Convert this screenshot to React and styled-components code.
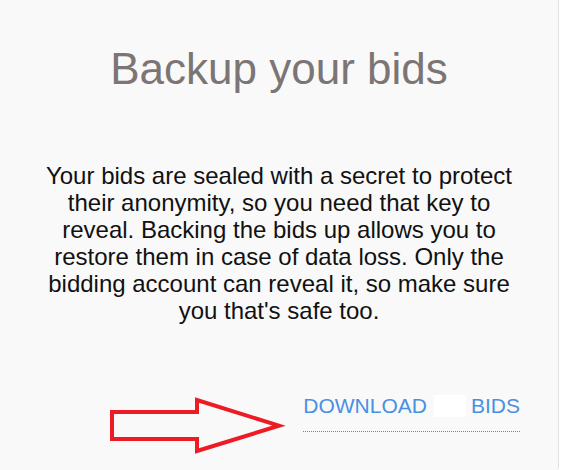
import React from 'react'
import styled, { createGlobalStyle } from 'styled-components'

const GlobalStyle = createGlobalStyle`
  html, body {
    margin: 0;
    padding: 0;
    background: #ffffff;
  }
  body {
    font-family: "Liberation Sans", Arial, sans-serif;
  }
`

const Card = styled.div`
  position: relative;
  box-sizing: border-box;
  width: 559px;
  height: 470px;
  padding: 44px 38px 0 0;
  background: #f9f9f9;
  border-right: 1px solid #e2e2e2;
  border-bottom-right-radius: 3px;
  overflow: hidden;
`

const Title = styled.h1`
  margin: 0;
  font-size: 44px;
  font-weight: 400;
  color: #7c7575;
  text-align: center;
  padding-left: 38px;
`

const Body = styled.p`
  width: 480px;
  margin: 68px auto 0;
  padding-left: 38px;
  font-size: 24px;
  line-height: 27px;
  color: #111111;
  text-align: center;
`

const Footer = styled.div`
  display: flex;
  justify-content: flex-end;
  margin-top: 70px;
`

const DownloadLink = styled.a`
  display: flex;
  align-items: center;
  padding-bottom: 13px;
  border-bottom: 1px dotted #4a90e2;
  font-size: 21px;
  color: #4a90e2;
  text-decoration: none;
  cursor: pointer;
`

const Mask = styled.span`
  display: inline-block;
  width: 32px;
  height: 22px;
  margin: 0 5px 0 7px;
  background: #ffffff;
`

const Arrow = styled.svg`
  position: absolute;
  left: 100px;
  top: 390px;
  width: 190px;
  height: 70px;
  overflow: visible;
`

const App = () => (
  <>
    <GlobalStyle />
    <Card>
      <Title>Backup your bids</Title>
      <Body>
        Your bids are sealed with a secret to protect their anonymity, so you
        need that key to reveal. Backing the bids up allows you to restore them
        in case of data loss. Only the bidding account can reveal it, so make
        sure you that's safe too.
      </Body>
      <Footer>
        <DownloadLink>
          <span>DOWNLOAD</span>
          <Mask />
          <span>BIDS</span>
        </DownloadLink>
      </Footer>
      <Arrow viewBox="0 0 190 70">
        <polygon
          points="12,22 97,22 97,10 179,35.7 97,61 97,49 12,49"
          fill="none"
          stroke="#ed1c24"
          strokeWidth="4"
          strokeLinejoin="miter"
        />
      </Arrow>
    </Card>
  </>
)

export default App
